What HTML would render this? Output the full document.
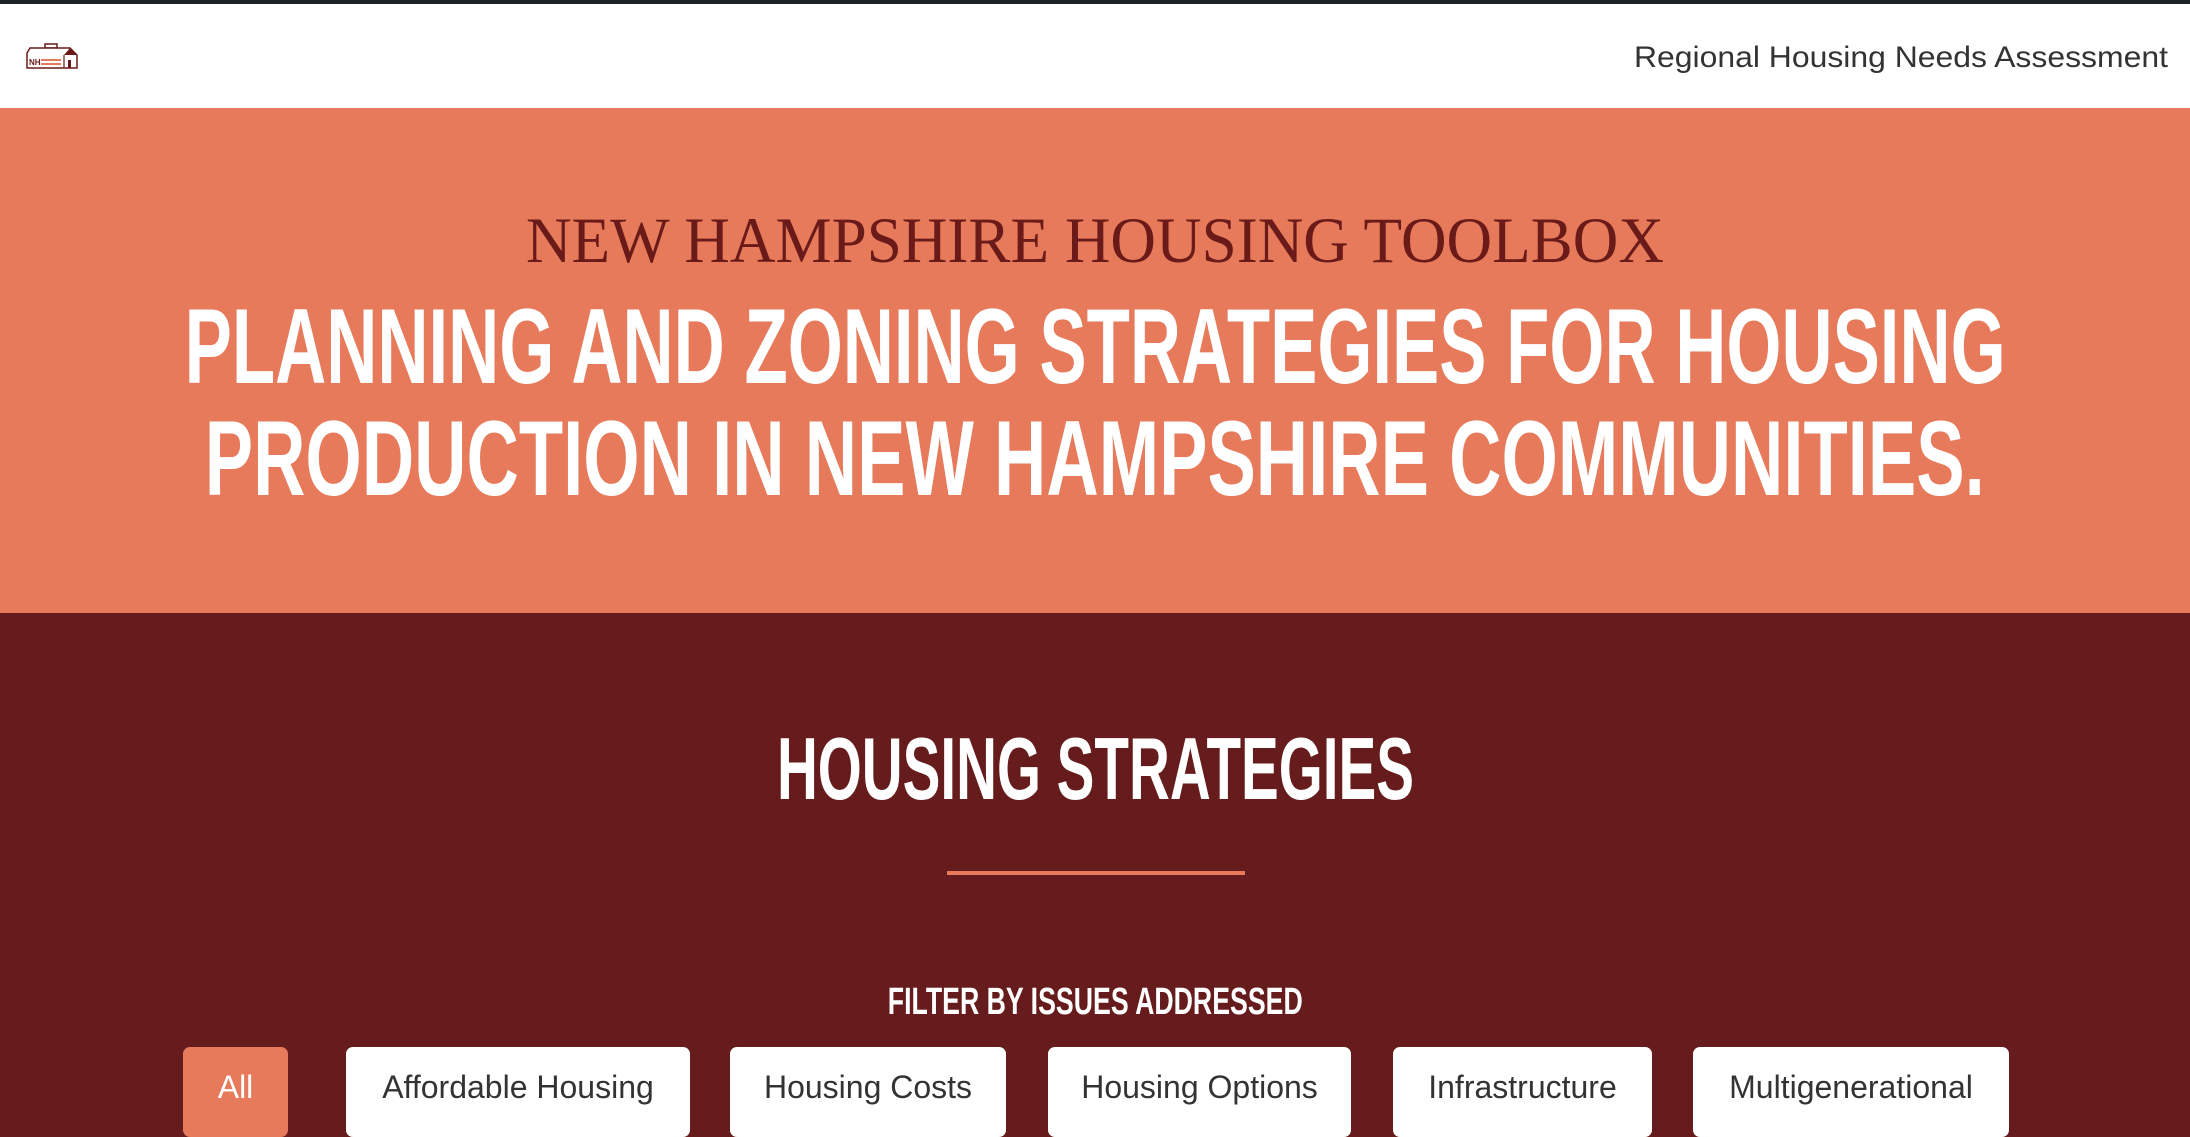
<!DOCTYPE html>
<html><head><meta charset="utf-8">
<style>
*{margin:0;padding:0;box-sizing:border-box}
body{width:2190px;height:1128px;overflow:hidden;background:#661B1C;font-family:"Liberation Sans",sans-serif;position:relative}
.topbar{position:absolute;left:0;top:0;width:2190px;height:4px;background:#1f2428}
.header{position:absolute;left:0;top:4px;width:2190px;height:104px;background:#fff}
.hero{position:absolute;left:0;top:108px;width:2190px;height:505px;background:#E67A5A}
.t{position:absolute;left:0;width:2190px;display:flex;justify-content:center;line-height:1;white-space:nowrap}
.t span{display:inline-block;transform-origin:center;flex:none}
.b{font-weight:bold}
.btn{position:absolute;top:1047px;height:90px;border-radius:7px;background:#fff;color:#333;font-size:32px;display:flex;align-items:center;justify-content:center;padding-bottom:10px}
</style></head><body>
<div class="topbar"></div>
<div class="header">
<svg style="position:absolute;left:26px;top:39px" width="52" height="26" viewBox="0 0 52 26">
<rect x="19" y="1" width="12" height="4" fill="none" stroke="#6b1a1a" stroke-width="1.5"/>
<path d="M1 10 L4 5 L44 5 L51 12 L51 25 L1 25 Z" fill="#fff" stroke="#6b1a1a" stroke-width="1.5"/>
<path d="M38 12 L44 5 L51 12 Z" fill="#6b1a1a"/>
<line x1="38" y1="12" x2="38" y2="25" stroke="#6b1a1a" stroke-width="1.2"/>
<rect x="42" y="17" width="3" height="8" fill="#6b1a1a"/>
<text x="3" y="22" font-family="Liberation Sans" font-weight="bold" font-size="8" fill="#6b1a1a">NH</text>
<rect x="15" y="16" width="20" height="2" fill="#e67a5a"/><rect x="15" y="20" width="20" height="2" fill="#e67a5a"/>
</svg>
<div style="position:absolute;right:22px;top:39px;font-size:30px;color:#333;line-height:1"><span class="fit r" data-w="534">Regional Housing Needs Assessment</span></div>
</div>
<div class="hero"></div>
<div class="t" style="top:209px;font-family:'Liberation Serif',serif;font-size:65px;color:#6B1A1A"><span class="fit" data-w="1138">NEW HAMPSHIRE HOUSING TOOLBOX</span></div>
<div class="t b" style="top:293px;font-size:107px;color:#fff"><span class="fit" data-w="1821">PLANNING AND ZONING STRATEGIES FOR HOUSING</span></div>
<div class="t b" style="top:405px;font-size:107px;color:#fff"><span class="fit" data-w="1780">PRODUCTION IN NEW HAMPSHIRE COMMUNITIES.</span></div>
<div class="t b" style="top:725px;font-size:88px;color:#fff"><span class="fit" data-w="637">HOUSING STRATEGIES</span></div>
<div style="position:absolute;left:947px;top:871px;width:298px;height:4px;background:#E67A5A"></div>
<div class="t b" style="top:983px;font-size:38px;color:#fff"><span class="fit" data-w="415">FILTER BY ISSUES ADDRESSED</span></div>
<div class="btn" style="left:183px;width:105px;background:#E67A5A;color:#fff">All</div>
<div class="btn" style="left:346px;width:344px">Affordable Housing</div>
<div class="btn" style="left:730px;width:276px">Housing Costs</div>
<div class="btn" style="left:1048px;width:303px">Housing Options</div>
<div class="btn" style="left:1393px;width:259px">Infrastructure</div>
<div class="btn" style="left:1693px;width:316px">Multigenerational</div>
<script>
document.querySelectorAll('.fit').forEach(function(e){e.style.display='inline-block';var w=e.getBoundingClientRect().width;var t=+e.dataset.w;if(w>0){if(e.classList.contains('r'))e.style.transformOrigin='right center';e.style.transform='scaleX('+(t/w)+')';}});
</script>
</body></html>
